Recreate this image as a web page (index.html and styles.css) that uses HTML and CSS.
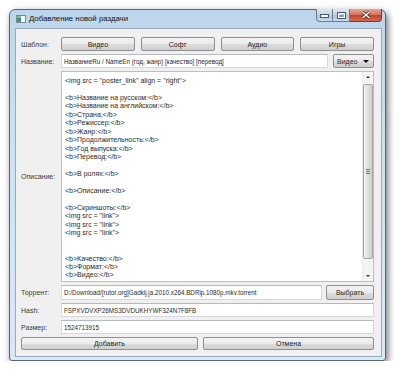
FILE: index.html
```html
<!DOCTYPE html>
<html lang="ru">

<head>
  <meta charset="UTF-8">
  <meta name="viewport" content="width=device-width, initial-scale=1.0">
  <title>Добавление новой раздачи</title>
  <link rel="stylesheet" href="styles.css">
</head>

<body>
  <div class="window">
    <div class="titlebar">
      <svg class="app-icon" width="10" height="8" viewBox="0 0 10 8">
        <rect x="0.5" y="0.5" width="9" height="7" fill="#fff" stroke="#7a8a96"/>
        <rect x="1" y="1" width="4" height="6" fill="#2f9a78"/>
        <rect x="1" y="1" width="4" height="2" fill="#6cc6a8"/>
      </svg>
      <span class="title">Добавление новой раздачи</span>
      <div class="caption">
        <span class="cap cap-min">
          <svg width="9" height="5" viewBox="0 0 9 5"><rect x="0.5" y="1.5" width="8" height="3" fill="#fff" stroke="#4b5868"/></svg>
        </span>
        <span class="cap cap-max">
          <svg width="9" height="7" viewBox="0 0 9 7"><rect x="0.5" y="0.5" width="8" height="6" fill="none" stroke="#4b5868"/><rect x="1.5" y="1.5" width="6" height="4" fill="none" stroke="#fff"/><rect x="2.5" y="3" width="4" height="2" fill="#8a98a8"/></svg>
        </span>
        <span class="cap cap-close">
          <svg width="10" height="8" viewBox="0 0 10 8"><path d="M1.5 1 L8.5 7 M8.5 1 L1.5 7" stroke="#5a1f18" stroke-width="3"/><path d="M1.5 1 L8.5 7 M8.5 1 L1.5 7" stroke="#fff" stroke-width="1.6"/></svg>
        </span>
      </div>
    </div>

    <div class="client">
      <div class="form">
        <span class="label">Шаблон:</span>
        <div class="templates">
          <button>Видео</button>
          <button>Софт</button>
          <button>Аудио</button>
          <button>Игры</button>
        </div>

        <span class="label">Название:</span>
        <div class="row">
          <div class="field">НазваниеRu / NameEn (год, жанр) [качество] [перевод]</div>
          <div class="combo">Видео<span class="combo-arrow"></span></div>
        </div>

        <span class="label">Описание:</span>
        <div class="memo">
          <div class="memo-text">&lt;img src = "poster_link" align = "right"&gt;

&lt;b&gt;Название на русском:&lt;/b&gt;
&lt;b&gt;Название на английском:&lt;/b&gt;
&lt;b&gt;Страна:&lt;/b&gt;
&lt;b&gt;Режиссер:&lt;/b&gt;
&lt;b&gt;Жанр:&lt;/b&gt;
&lt;b&gt;Продолжительность:&lt;/b&gt;
&lt;b&gt;Год выпуска:&lt;/b&gt;
&lt;b&gt;Перевод:&lt;/b&gt;

&lt;b&gt;В ролях:&lt;/b&gt;

&lt;b&gt;Описание:&lt;/b&gt;

&lt;b&gt;Скриншоты:&lt;/b&gt;
&lt;img src = "link"&gt;
&lt;img src = "link"&gt;
&lt;img src = "link"&gt;


&lt;b&gt;Качество:&lt;/b&gt;
&lt;b&gt;Формат:&lt;/b&gt;
&lt;b&gt;Видео:&lt;/b&gt;</div>
          <div class="scrollbar">
            <span class="sb-arrow sb-up"></span>
            <span class="sb-thumb"><span class="grip"></span></span>
            <span class="sb-track"></span>
            <span class="sb-arrow sb-down"></span>
          </div>
        </div>

        <span class="label">Торрент:</span>
        <div class="row">
          <div class="field">D:/Download/[rutor.org]Gadkij.ja.2010.x264.BDRip.1080p.mkv.torrent</div>
          <button class="browse">Выбрать</button>
        </div>

        <span class="label">Hash:</span>
        <div class="field">FSPXVDVXP26MS3DVDUKHYWF324N7F8FB</div>

        <span class="label">Размер:</span>
        <div class="field">1524713915</div>

        <div class="actions">
          <button>Добавить</button>
          <button>Отмена</button>
        </div>
      </div>
    </div>
  </div>
</body>

</html>
```

FILE: styles.css
```css
body {
  margin: 0;
  padding: 9px 0 0 9px;
  background: #fff;
  font-family: "Liberation Sans", Arial, sans-serif;
  font-size: 7px;
  color: #2a2a2a;
}

.window {
  width: 377px;
  box-sizing: border-box;
  border: 1px solid #53657a;
  border-radius: 6px 6px 3px 3px;
  background: linear-gradient(#bdd5ec, #cfe2f3 40%, #d9e8f5);
  box-shadow: 2px 3px 7px rgba(0, 0, 0, 0.55);
}

/* title bar */
.titlebar {
  height: 18px;
  display: flex;
  align-items: flex-start;
  padding: 0 3px 0 5px;
}

.app-icon {
  margin-top: 5px;
  margin-left: 1px;
}

.title {
  margin-left: 3px;
  margin-top: 4px;
  font-size: 7.8px;
  color: #111;
}

.caption {
  margin-left: auto;
  display: flex;
  margin-top: -1px;
}

.cap {
  height: 13px;
  display: flex;
  align-items: center;
  justify-content: center;
  box-sizing: border-box;
  border: 1px solid #6a7c92;
  border-top: none;
  background: linear-gradient(#dbe6f1, #c4d4e5 50%, #b0c3d8 51%, #c9dbee);
}

.cap-min {
  width: 17px;
  border-radius: 0 0 0 4px;
}

.cap-max {
  width: 17px;
  border-left: none;
}

.cap-close {
  width: 32px;
  border-left: none;
  border-color: #7a3b33;
  border-radius: 0 0 4px 0;
  background: linear-gradient(#e8a595, #d6705e 50%, #c2412d 51%, #d46a4c);
}

/* client area */
.client {
  margin: 0 3px 3px 5px;
  border: 1px solid #97a8bb;
  background: #f0f0f0;
  padding: 8px 7px 6px 5px;
}

.form {
  display: grid;
  grid-template-columns: 40px 1fr;
  grid-template-rows: 14px 14px 211px 15px 14px 14px 13px;
  row-gap: 3px;
}

.label {
  align-self: center;
  color: #3a3a3a;
}

button {
  font: inherit;
  color: #1e1e1e;
  padding: 0;
  border: 1px solid #8e8f8f;
  border-radius: 2px;
  background: linear-gradient(#f4f4f4, #ebebeb 50%, #dddddd 51%, #cfcfcf);
}

.templates {
  display: grid;
  grid-template-columns: repeat(4, 1fr);
  gap: 6px;
}

.row {
  display: flex;
  gap: 5px;
}

.field {
  flex: 1;
  box-sizing: border-box;
  border: 1px solid #d5d9de;
  border-top-color: #b5bac0;
  background: #fff;
  padding: 0 2px;
  display: flex;
  align-items: center;
  white-space: nowrap;
  overflow: hidden;
  font-size: 6.3px;
}

.combo {
  width: 41px;
  box-sizing: border-box;
  border: 1px solid #8e8f8f;
  border-radius: 2px;
  background: linear-gradient(#f4f4f4, #ebebeb 50%, #dddddd 51%, #cfcfcf);
  display: flex;
  align-items: center;
  padding-left: 3px;
}

.combo-arrow {
  margin-left: auto;
  margin-right: 4px;
  border-left: 3px solid transparent;
  border-right: 3px solid transparent;
  border-top: 3px solid #111;
}

.browse {
  width: 48px;
  margin-left: -1px;
}

/* description box */
.memo {
  display: flex;
  box-sizing: border-box;
  border: 1px solid #9fc6e6;
  background: #fff;
  overflow: hidden;
}

.memo-text {
  flex: 1;
  white-space: pre;
  line-height: 8.45px;
  padding: 5px 0 0 3px;
  overflow: hidden;
}

.scrollbar {
  width: 10px;
  display: flex;
  flex-direction: column;
  background: #f3f3f3;
  border-left: 1px solid #ececec;
}

.sb-arrow {
  height: 10px;
  display: flex;
  align-items: center;
  justify-content: center;
}

.sb-up::after,
.sb-down::after {
  content: "";
  border-left: 2px solid transparent;
  border-right: 2px solid transparent;
}

.sb-up::after {
  border-bottom: 2px solid #333;
}

.sb-down::after {
  border-top: 2px solid #333;
}

.sb-thumb {
  height: 175px;
  margin: 2px 0 0;
  box-sizing: border-box;
  border: 1px solid #a4a4a4;
  border-radius: 2px;
  background: linear-gradient(90deg, #f0f0f0, #dcdcdc 60%, #cfcfcf);
  display: flex;
  align-items: center;
  justify-content: center;
}

.grip {
  width: 4px;
  height: 5px;
  background: repeating-linear-gradient(#777 0 1px, transparent 1px 2px);
}

.sb-track {
  flex: 1;
}

.actions {
  grid-column: 1 / -1;
  display: grid;
  grid-template-columns: 177px 1fr;
  gap: 5px;
}
```
